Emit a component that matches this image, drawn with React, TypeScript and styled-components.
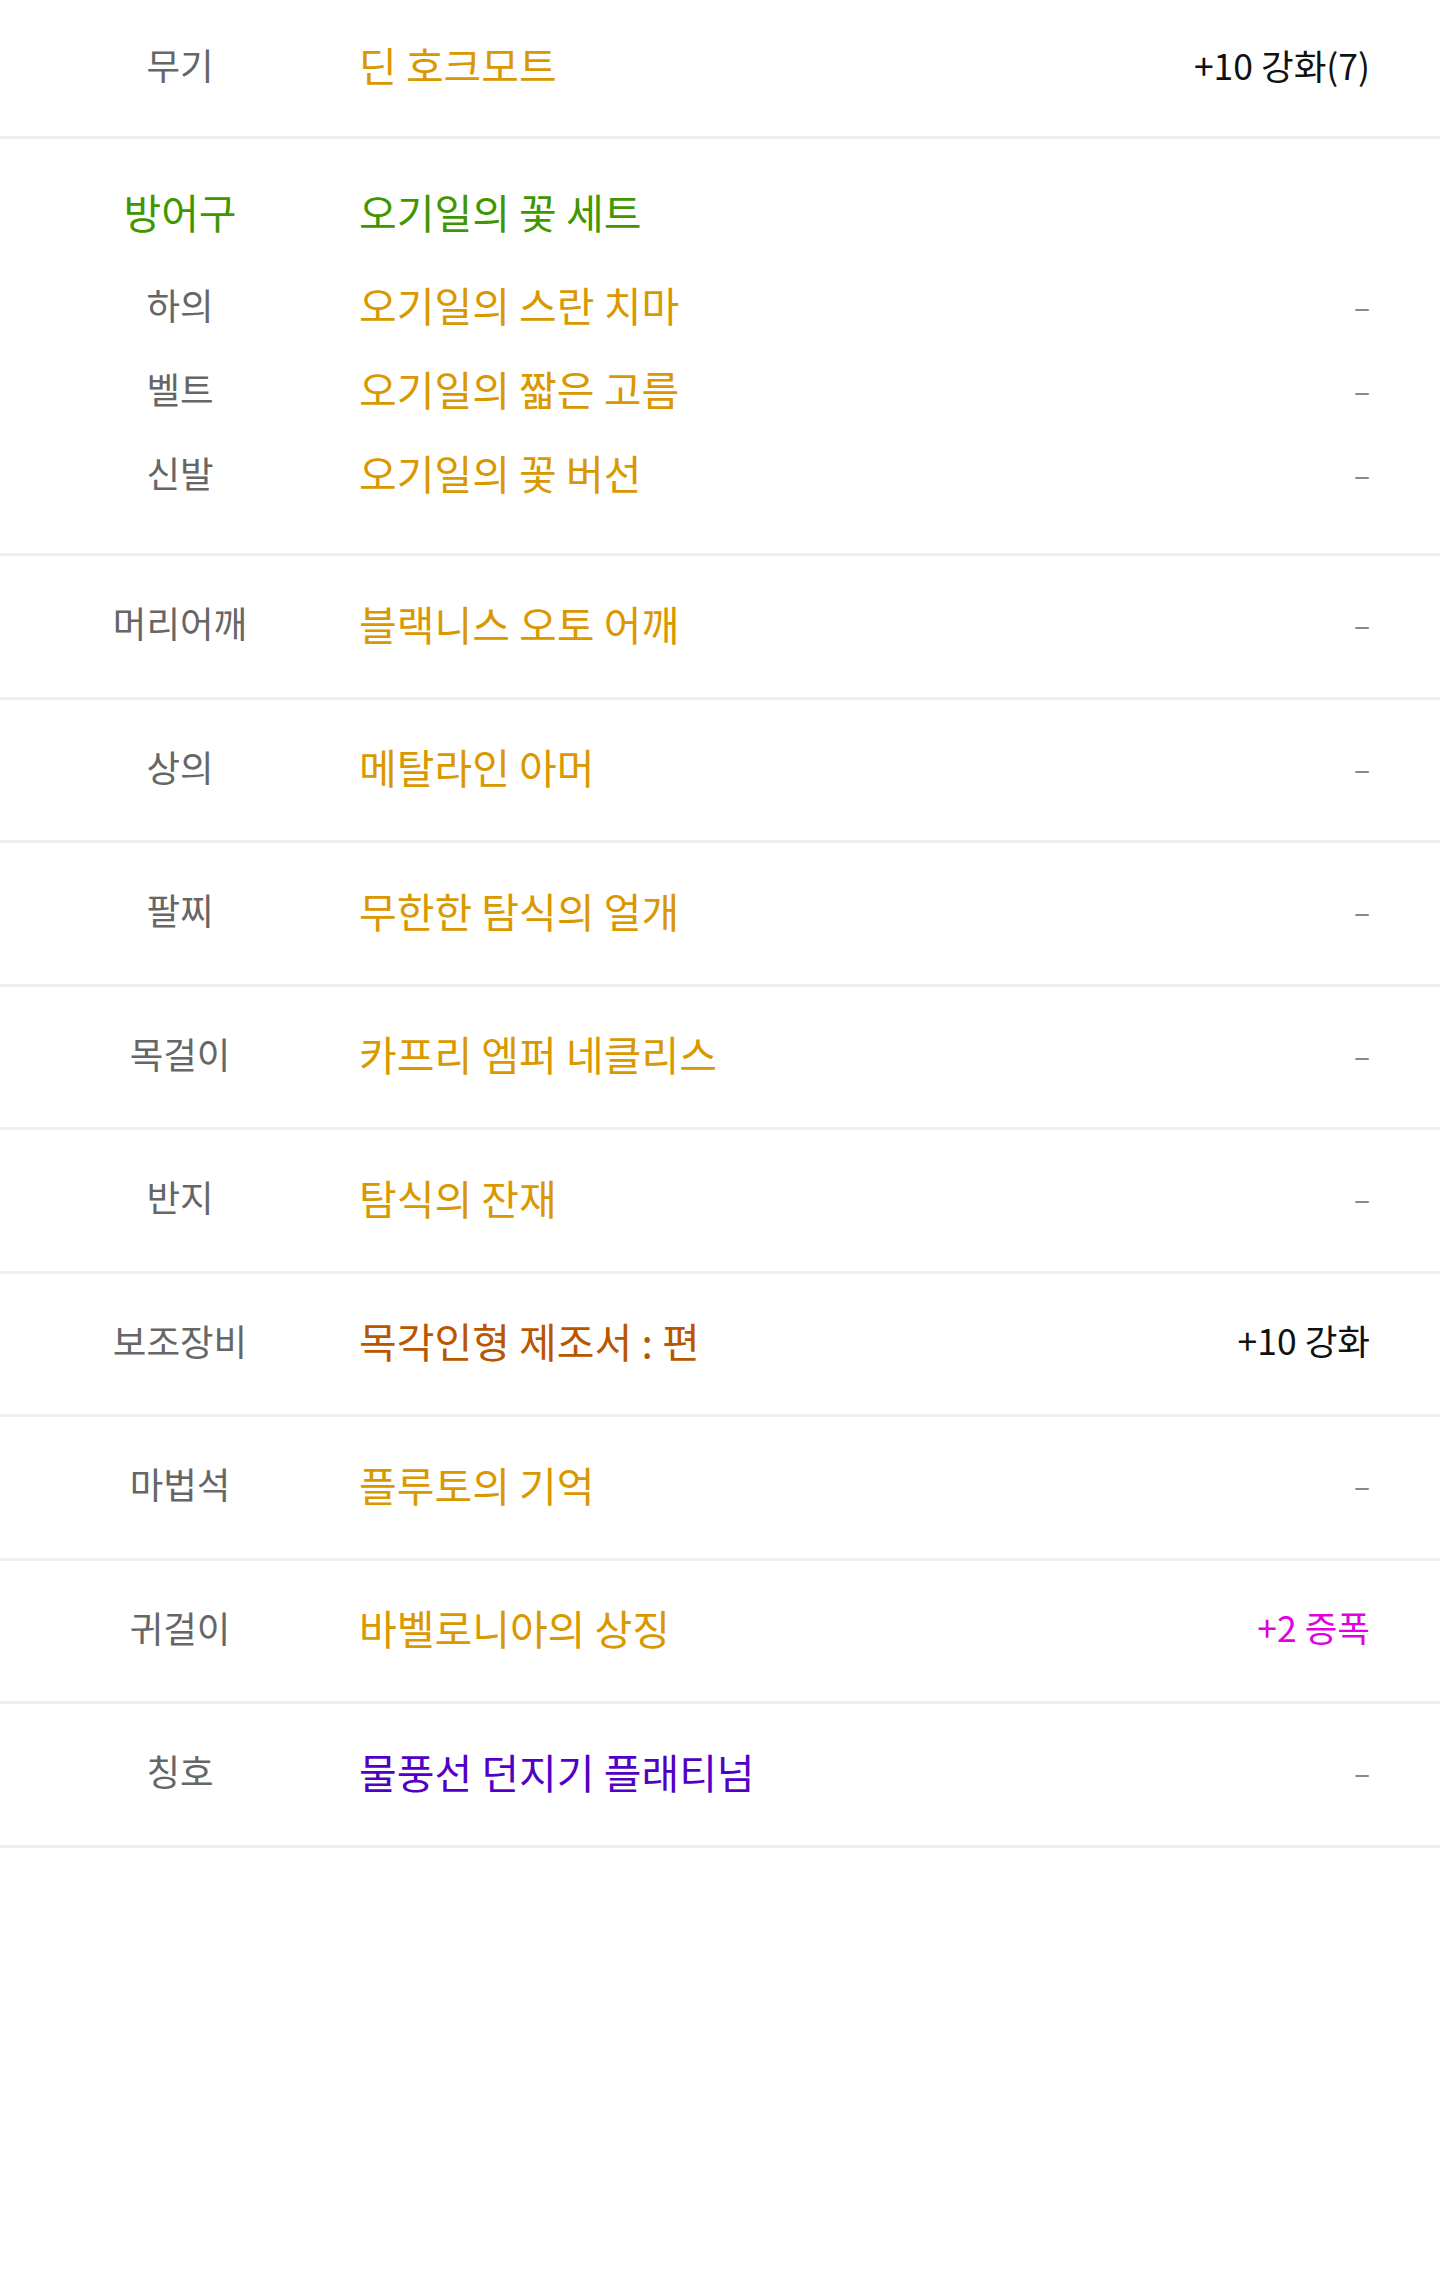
import React from "react";
import styled, { createGlobalStyle } from "styled-components";

const GlobalStyle = createGlobalStyle`
  html, body {
    margin: 0;
    padding: 0;
    background: #ffffff;
  }
  body {
    font-family: "Noto Sans CJK KR", "Noto Sans", sans-serif;
    -webkit-font-smoothing: antialiased;
  }
`;

const COLORS = {
  label: "#666666",
  unique: "#DA9800",
  set: "#3F9700",
  legendary: "#B85700",
  epic: "#5300C6",
  value: "#111111",
  amplify: "#E000E0",
  dash: "#888888",
};

const List = styled.div`
  width: 100%;
  display: flex;
  flex-direction: column;
`;

const Row = styled.div<{ $first?: boolean }>`
  box-sizing: border-box;
  display: grid;
  grid-template-columns: 360px 1fr auto;
  align-items: center;
  height: ${(p) => (p.$first ? "139px" : "143.5px")};
  padding: 0 70px 6px 0;
  border-bottom: 3px solid #f0f0f0;
`;

const Group = styled.div`
  display: flex;
  flex-direction: column;
  padding: 31px 70px 38px 0;
  border-bottom: 3px solid #f0f0f0;
`;

const GroupHeader = styled.div`
  display: grid;
  grid-template-columns: 360px 1fr auto;
  align-items: center;
  height: 84px;
  margin-bottom: 9px;
`;

const SubRow = styled.div`
  display: grid;
  grid-template-columns: 360px 1fr auto;
  align-items: center;
  height: 84px;
`;

const Label = styled.div<{ $color?: string; $big?: boolean }>`
  text-align: center;
  font-size: ${(p) => (p.$big ? "41px" : "36.5px")};
  line-height: 1.2;
  color: ${(p) => p.$color || COLORS.label};
  white-space: nowrap;
`;

const Name = styled.div<{ $color: string }>`
  font-size: 41px;
  line-height: 1.2;
  color: ${(p) => p.$color};
  white-space: nowrap;
  margin-left: -1px;
`;

const Value = styled.div<{ $color?: string }>`
  font-size: 35.5px;
  line-height: 1.2;
  text-align: right;
  color: ${(p) => p.$color || COLORS.value};
  white-space: nowrap;
`;

const Dash = styled.div`
  font-size: 30px;
  line-height: 1.2;
  text-align: right;
  color: ${COLORS.dash};
`;

type Item = {
  label: string;
  name: string;
  color: string;
  value?: string;
  valueColor?: string;
};

const armor = {
  label: "방어구",
  name: "오기일의 꽃 세트",
  parts: [
    { label: "하의", name: "오기일의 스란 치마" },
    { label: "벨트", name: "오기일의 짧은 고름" },
    { label: "신발", name: "오기일의 꽃 버선" },
  ],
};

const items: Item[] = [
  { label: "머리어깨", name: "블랙니스 오토 어깨", color: COLORS.unique },
  { label: "상의", name: "메탈라인 아머", color: COLORS.unique },
  { label: "팔찌", name: "무한한 탐식의 얼개", color: COLORS.unique },
  { label: "목걸이", name: "카프리 엠퍼 네클리스", color: COLORS.unique },
  { label: "반지", name: "탐식의 잔재", color: COLORS.unique },
  {
    label: "보조장비",
    name: "목각인형 제조서 : 편",
    color: COLORS.legendary,
    value: "+10 강화",
  },
  { label: "마법석", name: "플루토의 기억", color: COLORS.unique },
  {
    label: "귀걸이",
    name: "바벨로니아의 상징",
    color: COLORS.unique,
    value: "+2 증폭",
    valueColor: COLORS.amplify,
  },
  { label: "칭호", name: "물풍선 던지기 플래티넘", color: COLORS.epic },
];

const ValueCell: React.FC<{ value?: string; color?: string }> = ({ value, color }) =>
  value ? <Value $color={color}>{value}</Value> : <Dash>–</Dash>;

export default function App() {
  return (
    <>
      <GlobalStyle />
      <List>
        <Row $first>
          <Label>무기</Label>
          <Name $color={COLORS.unique}>딘 호크모트</Name>
          <Value>+10 강화(7)</Value>
        </Row>
        <Group>
          <GroupHeader>
            <Label $color={COLORS.set} $big>
              {armor.label}
            </Label>
            <Name $color={COLORS.set}>{armor.name}</Name>
            <span />
          </GroupHeader>
          {armor.parts.map((p) => (
            <SubRow key={p.label}>
              <Label>{p.label}</Label>
              <Name $color={COLORS.unique}>{p.name}</Name>
              <Dash>–</Dash>
            </SubRow>
          ))}
        </Group>
        {items.map((it) => (
          <Row key={it.label}>
            <Label>{it.label}</Label>
            <Name $color={it.color}>{it.name}</Name>
            <ValueCell value={it.value} color={it.valueColor} />
          </Row>
        ))}
      </List>
    </>
  );
}
